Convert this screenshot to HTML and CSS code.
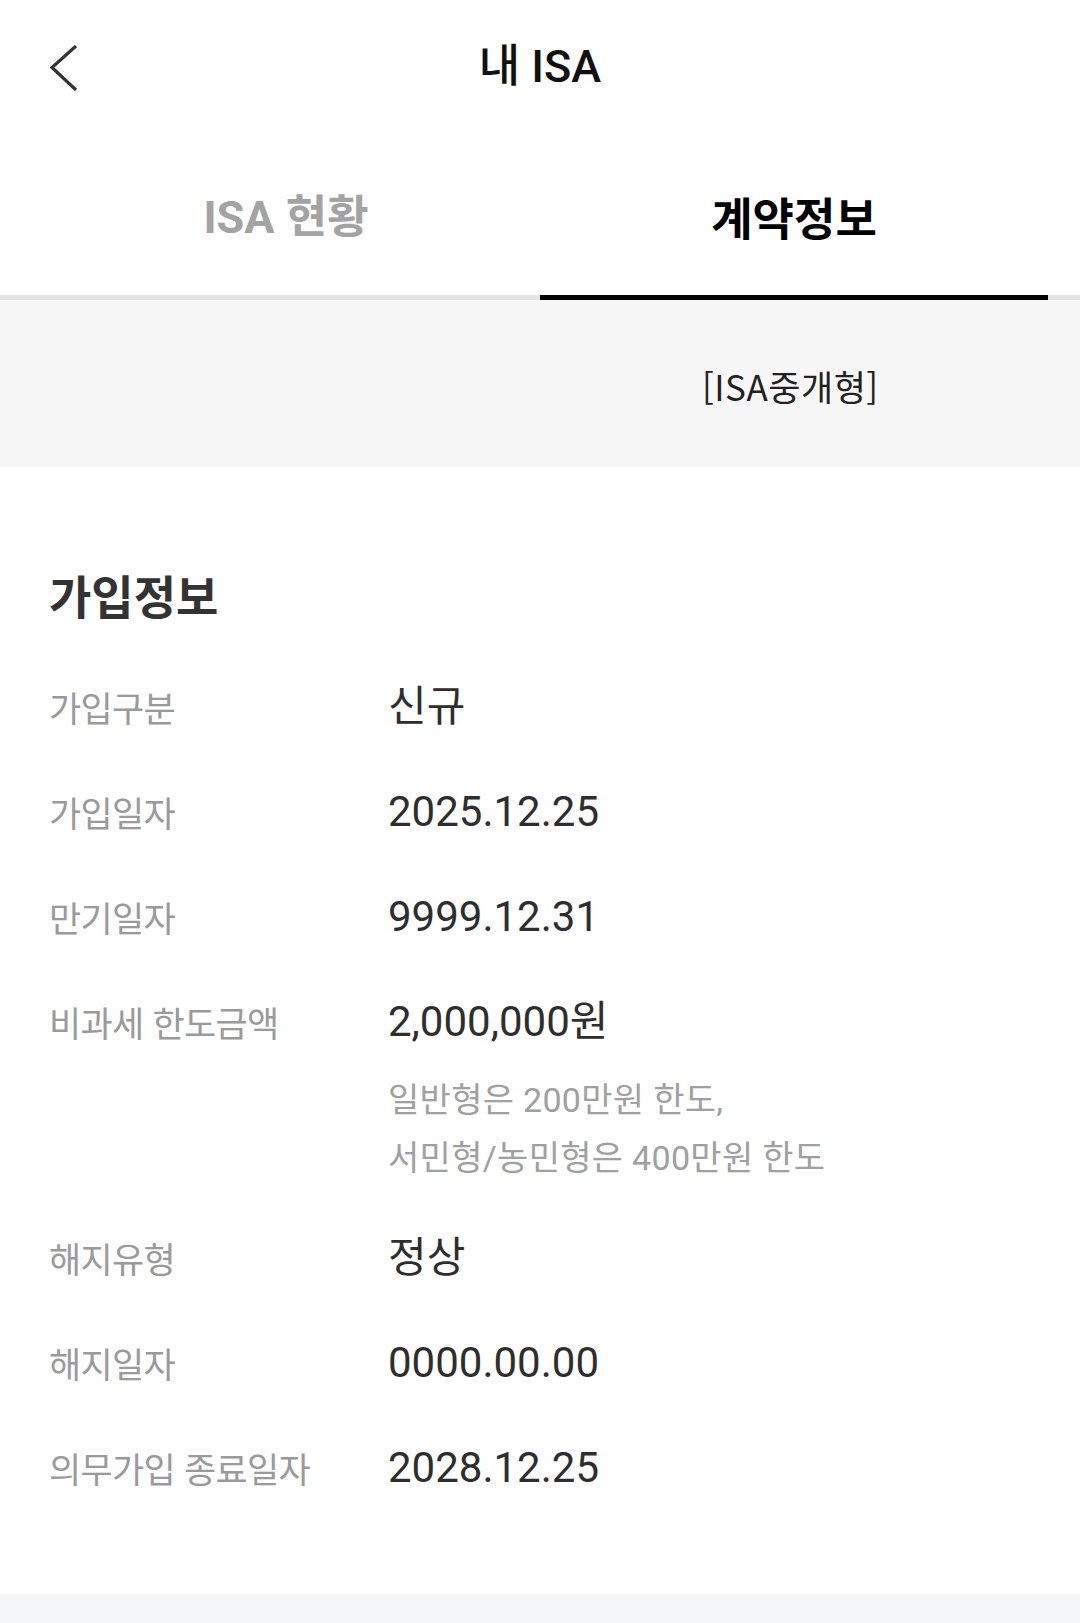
FILE: index.html
```html
<!DOCTYPE html>
<html lang="ko">
<head>
  <meta charset="UTF-8">
  <meta name="viewport" content="width=device-width, initial-scale=1.0">
  <title>내 ISA</title>
  <link rel="stylesheet" href="styles.css">
</head>
<body>
  <div class="header">
    <button class="back-btn" aria-label="뒤로">
      <svg width="32" height="48" viewBox="0 0 32 48">
        <polyline points="27,2 3,23.5 27,46" fill="none" stroke="#333" stroke-width="3.2" stroke-linejoin="miter"/>
      </svg>
    </button>
    <h1 class="title">내 ISA</h1>
  </div>

  <div class="tabs">
    <div class="tab">ISA 현황</div>
    <div class="tab active">계약정보</div>
  </div>

  <div class="account">
    <span class="account-type">[ISA중개형]</span>
  </div>

  <div class="info">
    <h2 class="info-title">가입정보</h2>
    <div class="row">
      <span class="label">가입구분</span>
      <span class="value">신규</span>
    </div>
    <div class="row">
      <span class="label">가입일자</span>
      <span class="value">2025.12.25</span>
    </div>
    <div class="row">
      <span class="label">만기일자</span>
      <span class="value">9999.12.31</span>
    </div>
    <div class="row">
      <span class="label">비과세 한도금액</span>
      <div>
        <span class="value">2,000,000원</span>
        <p class="note">일반형은 200만원 한도,<br>서민형/농민형은 400만원 한도</p>
      </div>
    </div>
    <div class="row">
      <span class="label">해지유형</span>
      <span class="value">정상</span>
    </div>
    <div class="row">
      <span class="label">해지일자</span>
      <span class="value">0000.00.00</span>
    </div>
    <div class="row">
      <span class="label">의무가입 종료일자</span>
      <span class="value">2028.12.25</span>
    </div>
  </div>

  <div class="footer"></div>
</body>
</html>
```

FILE: styles.css
```css
body {
  margin: 0;
  background: #FFFFFF;
  font-family: Roboto, 'Noto Sans CJK KR', sans-serif;
  color: #333333;
}

.header {
  height: 132px;
  display: flex;
  align-items: center;
  justify-content: center;
  position: relative;
}

.back-btn {
  position: absolute;
  left: 49px;
  top: 44px;
  padding: 0;
  border: none;
  background: none;
  display: flex;
}

.title {
  margin: 0;
  font-size: 45px;
  font-weight: 500;
  color: #111111;
  line-height: 1;
}

.tabs {
  display: flex;
  padding: 0 32px;
  border-bottom: 5px solid #E2E2E2;
}

.tab {
  flex: 1;
  height: 163px;
  display: flex;
  align-items: center;
  justify-content: center;
  font-size: 45px;
  font-weight: 700;
  color: #A3A3A3;
}

.tab.active {
  color: #000000;
  height: 158px;
  border-bottom: 5px solid #000000;
  margin-bottom: -5px;
  padding-top: 5px;
}

.account {
  height: 167px;
  box-sizing: border-box;
  background: #F7F7F7;
  padding: 66px 0 0 702px;
  line-height: 40px;
}

.account-type {
  font-family: 'Noto Sans CJK KR', sans-serif;
  font-size: 35px;
  letter-spacing: 0.5px;
  color: #222222;
}

.info {
  padding: 97px 49px 74px;
}

.info-title {
  margin: 0 0 30px;
  font-family: 'Noto Sans CJK KR', sans-serif;
  font-size: 46px;
  font-weight: 700;
  line-height: 60px;
  color: #333333;
}

.row {
  display: grid;
  grid-template-columns: 339px 1fr;
  align-items: start;
}

.label {
  font-family: 'Noto Sans CJK KR', sans-serif;
  font-size: 35px;
  letter-spacing: -0.7px;
  line-height: 105px;
  color: #9A9A9A;
}

.value {
  display: block;
  font-size: 42px;
  line-height: 105px;
  color: #2E2E2E;
}

.note {
  margin: -3px 0 18px;
  font-size: 34px;
  letter-spacing: 0.3px;
  line-height: 58px;
  color: #A0A0A0;
}

.footer {
  height: 40px;
  background: #F5F6F8;
}
```
